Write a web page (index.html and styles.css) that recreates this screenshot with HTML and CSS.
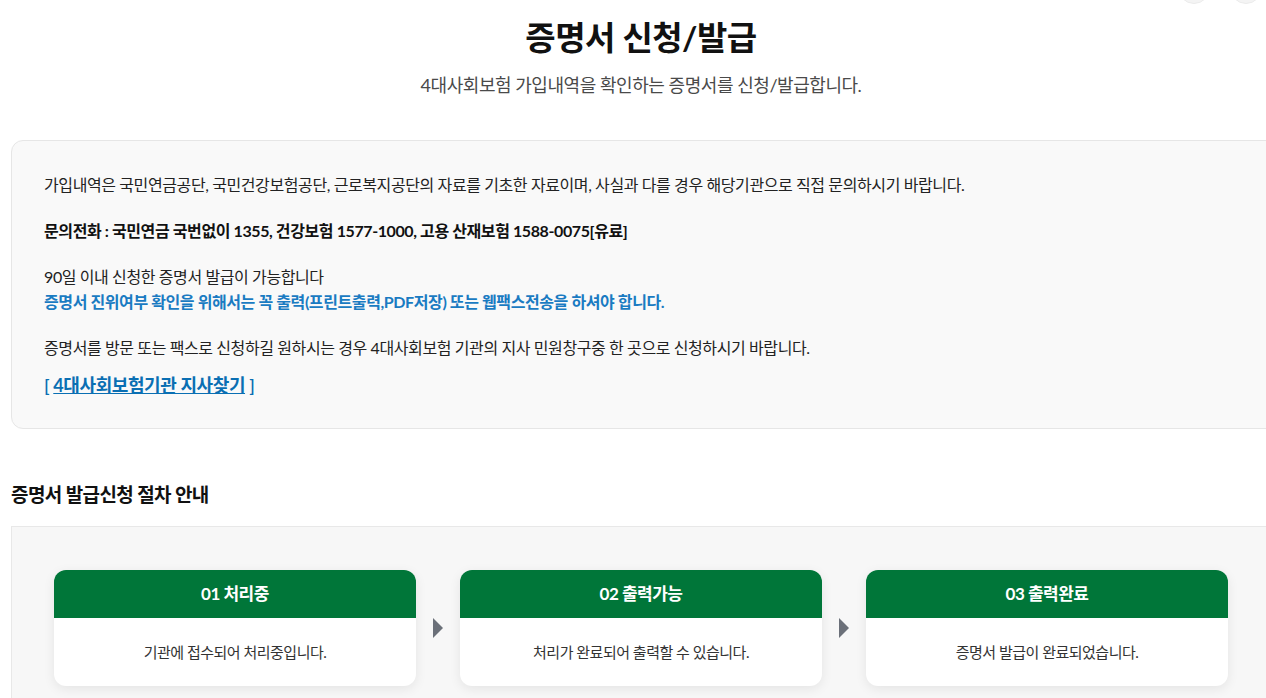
FILE: index.html
```html
<!DOCTYPE html>
<html lang="ko">
<head>
<meta charset="utf-8">
<title>증명서 신청/발급</title>
<link rel="stylesheet" href="styles.css">
</head>
<body>
<div class="page">
  <div class="topbar">
    <span class="circle"></span>
    <span class="circle"></span>
  </div>
  <header class="head">
    <h1 class="title">증명서 신청/발급</h1>
    <p class="subtitle">4대사회보험 가입내역을 확인하는 증명서를 신청/발급합니다.</p>
  </header>

  <section class="info">
    <p>가입내역은 국민연금공단, 국민건강보험공단, 근로복지공단의 자료를 기초한 자료이며, 사실과 다를 경우 해당기관으로 직접 문의하시기 바랍니다.</p>
    <p class="strong">문의전화 : 국민연금 국번없이 1355, 건강보험 1577-1000, 고용 산재보험 1588-0075[유료]</p>
    <p>90일 이내 신청한 증명서 발급이 가능합니다<br><span class="blue">증명서 진위여부 확인을 위해서는 꼭 출력(프린트출력,PDF저장) 또는 웹팩스전송을 하셔야 합니다.</span></p>
    <p class="before-link">증명서를 방문 또는 팩스로 신청하길 원하시는 경우 4대사회보험 기관의 지사 민원창구중 한 곳으로 신청하시기 바랍니다.</p>
    <p class="linkline">[ <a href="#" class="link">4대사회보험기관 지사찾기</a> ]</p>
  </section>

  <h2 class="section-title">증명서 발급신청 절차 안내</h2>

  <section class="steps">
    <div class="card">
      <div class="card-head">01 처리중</div>
      <div class="card-body">기관에 접수되어 처리중입니다.</div>
    </div>
    <span class="arrow"></span>
    <div class="card">
      <div class="card-head">02 출력가능</div>
      <div class="card-body">처리가 완료되어 출력할 수 있습니다.</div>
    </div>
    <span class="arrow"></span>
    <div class="card">
      <div class="card-head">03 출력완료</div>
      <div class="card-body">증명서 발급이 완료되었습니다.</div>
    </div>
  </section>
</div>
</body>
</html>
```
FILE: styles.css
```css
html, body {
  margin: 0;
  padding: 0;
  background: #fff;
  overflow: hidden;
}
body {
  font-family: Lato, "Noto Sans CJK KR", sans-serif;
  color: #222;
}
.page {
  width: 1260px;
  margin-left: 11px;
}
.topbar {
  height: 4px;
  overflow: hidden;
  display: flex;
  justify-content: flex-end;
  align-items: flex-end;
  gap: 20px;
  margin-left: -11px;
  width: 1266px;
}
.circle {
  flex: none;
  width: 30px;
  height: 30px;
  border-radius: 50%;
  background: #f4f4f4;
  border: 1px solid #ebebeb;
}
.topbar .circle:last-child { margin-right: 4px; }
.head {
  text-align: center;
}
.title {
  margin: 11px 0 0;
  font-size: 33px;
  font-weight: 700;
  line-height: 44px;
  letter-spacing: -0.5px;
  color: #111;
}
.subtitle {
  margin: 13px 0 0;
  font-size: 18px;
  line-height: 26px;
  color: #4a4a4a;
  letter-spacing: -0.45px;
}
.info {
  margin-top: 42px;
  margin-right: -30px;
  background: #f9f9f9;
  border: 1px solid #e6e6e6;
  border-radius: 12px;
  padding: 31px 32px 30px;
  font-size: 16px;
  line-height: 25px;
  letter-spacing: -0.4px;
  color: #222;
}
.info p {
  margin: 0 0 21px;
}
.info p.before-link {
  margin-bottom: 13px;
}
.info p.linkline {
  margin: 0;
  font-size: 18px;
  line-height: 25px;
  color: #0a6fb3;
  font-weight: 600;
}
.strong {
  font-weight: 700;
  color: #111;
}
.blue {
  color: #1a7bc2;
  font-weight: 700;
}
.link {
  color: #0a6fb3;
  text-decoration: underline;
  font-weight: 700;
}
.section-title {
  margin: 53px 0 0;
  font-size: 19px;
  line-height: 26px;
  font-weight: 700;
  letter-spacing: -0.6px;
  color: #111;
}
.steps {
  margin-top: 18px;
  margin-right: -30px;
  background: #f7f7f7;
  border: 1px solid #e8e8e8;
  border-bottom: none;
  padding: 43px 72px 30px 42px;
  display: flex;
  align-items: center;
  justify-content: space-between;
}
.card {
  width: 362px;
  border-radius: 12px;
  overflow: hidden;
  background: #fff;
  box-shadow: 0 3px 12px rgba(0, 0, 0, 0.08);
}
.card-head {
  background: #007639;
  color: #fff;
  height: 48px;
  line-height: 48px;
  text-align: center;
  font-size: 17px;
  font-weight: 700;
  letter-spacing: -0.5px;
}
.card-body {
  height: 68px;
  line-height: 68px;
  text-align: center;
  font-size: 15px;
  color: #333;
  letter-spacing: -0.5px;
}
.arrow {
  flex: none;
  width: 0;
  height: 0;
  border-top: 10px solid transparent;
  border-bottom: 10px solid transparent;
  border-left: 10px solid #6b7079;
}
```
